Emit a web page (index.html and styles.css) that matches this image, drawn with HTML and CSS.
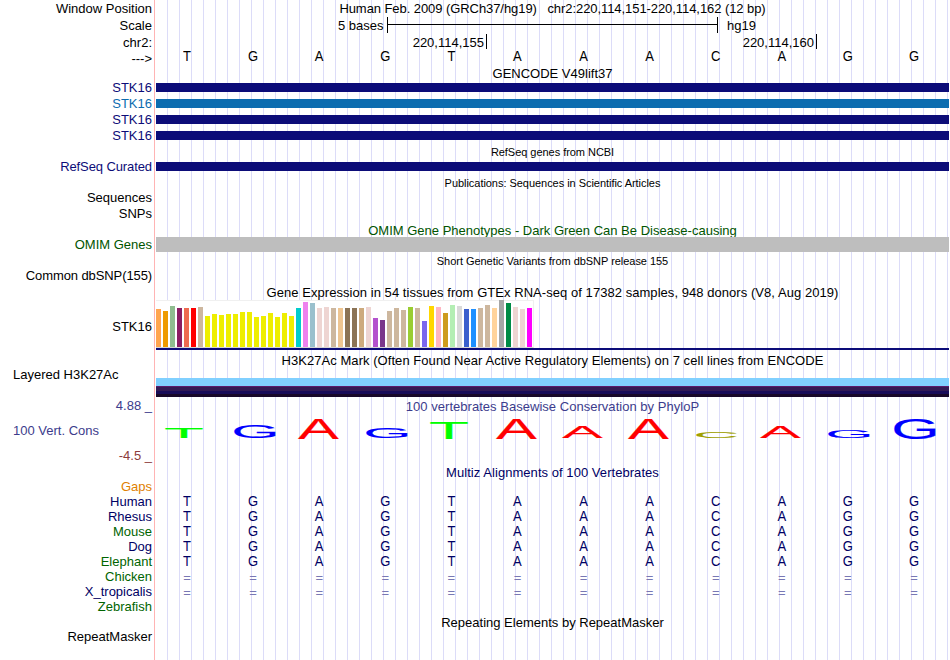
FILE: index.html
```html
<!DOCTYPE html>
<html lang="en">
<head>
    <meta charset="UTF-8">
    <title>Human chr2:220,114,151-220,114,162 Genome Browser</title>
    <link rel="stylesheet" href="styles.css">
</head>
<body>
    <div class="browser">
        <div class="row h17">
            <div class="label">Window Position</div>
            <div class="title position">Human Feb. 2009 (GRCh37/hg19) &nbsp; chr2:220,114,151-220,114,162 (12 bp)</div>
        </div>
        <div class="row h17">
            <div class="label">Scale</div>
            <div class="scale">
                <span class="scale-size">5 bases</span>
                <span class="ruler"><span class="ruler-line"></span></span>
                <span>hg19</span>
            </div>
        </div>
        <div class="row h17">
            <div class="label">chr2:</div>
            <div class="ticks">
                <span class="tick">220,114,155</span>
                <span class="tick">220,114,160</span>
            </div>
        </div>
        <div class="row h15">
            <div class="label">---&gt;</div>
            <div class="bases up">TGAGTAAACAGG</div>
        </div>

        <div class="row h14"><div class="label"></div><div class="title">GENCODE V49lift37</div></div>
        <div class="row h16 navy"><div class="label">STK16</div><div class="gene"></div></div>
        <div class="row h16 blue"><div class="label">STK16</div><div class="gene"></div></div>
        <div class="row h16 navy"><div class="label">STK16</div><div class="gene"></div></div>
        <div class="row h16 navy"><div class="label">STK16</div><div class="gene"></div></div>

        <div class="row h14"><div class="label"></div><div class="title small">RefSeq genes from NCBI</div></div>
        <div class="row h17 navy refseq"><div class="label tight">RefSeq Curated</div><div class="gene"></div></div>

        <div class="row h15"><div class="label"></div><div class="title small down">Publications: Sequences in Scientific Articles</div></div>
        <div class="row h16"><div class="label">Sequences</div></div>
        <div class="row h16"><div class="label">SNPs</div></div>

        <div class="row h15 green"><div class="label"></div><div class="title down">OMIM Gene Phenotypes - Dark Green Can Be Disease-causing</div></div>
        <div class="row h15 green"><div class="label">OMIM Genes</div><div class="omim"></div></div>

        <div class="row h16"><div class="label"></div><div class="title small down">Short Genetic Variants from dbSNP release 155</div></div>
        <div class="row h16"><div class="label tight">Common dbSNP(155)</div></div>

        <div class="row h16"><div class="label"></div><div class="title down wide">Gene Expression in 54 tissues from GTEx RNA-seq of 17382 samples, 948 donors (V8, Aug 2019)</div></div>
        <div class="row gtex-row">
            <div class="label">STK16</div>
            <div class="gtex"><div class="gtex-bars" id="gtex"></div></div>
        </div>

        <div class="row h3k-row">
            <div class="label left">Layered H3K27Ac</div>
            <div class="h3k">
                <div class="title wide">H3K27Ac Mark (Often Found Near Active Regulatory Elements) on 7 cell lines from ENCODE</div>
                <div class="h3k-band"></div>
            </div>
        </div>

        <div class="row cons-row">
            <div class="label cons">
                <span class="max">4.88 _</span>
                <span class="name">100 Vert. Cons</span>
                <span class="min">-4.5 _</span>
            </div>
            <div class="phylop">
                <div class="title max">100 vertebrates Basewise Conservation by PhyloP</div>
                <svg class="logo" id="logo" width="793" height="26" viewBox="156 415 793 26"></svg>
            </div>
        </div>

        <div class="row h14 dark"><div class="label"></div><div class="title wide">Multiz Alignments of 100 Vertebrates</div></div>
        <div class="row h15"><div class="label orange">Gaps</div></div>
        <div class="row h15 dark"><div class="label">Human</div><div class="bases">TGAGTAAACAGG</div></div>
        <div class="row h15 dark"><div class="label">Rhesus</div><div class="bases">TGAGTAAACAGG</div></div>
        <div class="row h15 dark"><div class="label green">Mouse</div><div class="bases">TGAGTAAACAGG</div></div>
        <div class="row h15 dark"><div class="label">Dog</div><div class="bases">TGAGTAAACAGG</div></div>
        <div class="row h15 dark"><div class="label green">Elephant</div><div class="bases">TGAGTAAACAGG</div></div>
        <div class="row h15 dark"><div class="label green">Chicken</div><div class="bases gap">============</div></div>
        <div class="row h15 dark"><div class="label">X_tropicalis</div><div class="bases gap">============</div></div>
        <div class="row h15 dark"><div class="label green">Zebrafish</div></div>

        <div class="row h15"><div class="label"></div><div class="title down">Repeating Elements by RepeatMasker</div></div>
        <div class="row h15"><div class="label">RepeatMasker</div></div>
    </div>
    <script src="tracks.js"></script>
</body>
</html>
```
FILE: styles.css
```css
body {
    margin: 0;
    background: #fff;
    font-family: "Liberation Sans", Arial, Helvetica, sans-serif;
    font-size: 13px;
    color: #000;
}
.browser {
    box-sizing: border-box;
    width: 950px;
    height: 660px;
    overflow: hidden;
    /* left edge line, then a guideline every 12px */
    background:
        linear-gradient(#ffb4b4, #ffb4b4) 154px 0 / 1px 100% no-repeat,
        repeating-linear-gradient(90deg, #dcdcf8 0, #dcdcf8 1px, transparent 1px, transparent 12px) 167px 0 / 783px 100% no-repeat;
}
.row {
    display: grid;
    grid-template-columns: 152px 793px;
    column-gap: 4px;
    line-height: 16px;
    white-space: nowrap;
}
.h14 { height: 14px; line-height: 16px; }
.h15 { height: 15px; line-height: 15px; }
.h16 { height: 16px; }
.h17 { height: 17px; line-height: 17px; }
.label { text-align: right; }
.label.left { text-align: left; padding-left: 13px; }
.title { text-align: center; }
.small { font-size: 11px; letter-spacing: -0.04px; }
.wide { letter-spacing: 0.05px; }
.tight { letter-spacing: -0.1px; }
.position { letter-spacing: -0.07px; }
.down { line-height: 17px; }
.h16 .down { line-height: 18px; }

.navy { color: #0c0c78; }
.blue { color: #0c6cb0; }
.green { color: #005400; }
.dark { color: #000064; }
.orange { color: #e08000; }
.dark .green { color: #006400; }

/* scale and coordinates */
.scale {
    display: flex;
    padding-left: 182px;
}
.scale-size { width: 49px; }
.ruler {
    box-sizing: border-box;
    width: 331px;
    height: 16px;
    margin-right: 9px;
    border: solid #000;
    border-width: 0 1px;
}
.ruler-line {
    display: block;
    height: 1px;
    margin-top: 7px;
    background: #000;
}
.ticks { display: flex; }
.tick {
    box-sizing: border-box;
    width: 330px;
    height: 15px;
    padding-right: 2px;
    border-right: 1px solid #000;
    text-align: right;
}
.tick:first-child { width: 331px; }
.bases {
    display: grid;
    grid-template-columns: repeat(12, 1fr);
    margin-left: -2px;
    margin-right: 2px;
    text-align: center;
    transform: scaleY(1.1);
}
.bases.gap {
    color: #7878b4;
    line-height: 17px;
    transform: none;
}
.up { line-height: 12px; }

/* tracks */
.gene {
    height: 9px;
    margin-top: 3px;
    background: currentColor;
}
.refseq .gene { margin-top: 4px; }
.omim {
    z-index: 1;
    height: 15px;
    background: #bebebe;
}
.gtex-row { height: 50px; line-height: 54px; }
.gtex {
    height: 50px;
    box-sizing: border-box;
    border-bottom: 2px solid #0c0c78;
}
.gtex-bars {
    display: flex;
    align-items: flex-end;
    gap: 2px;
    box-sizing: border-box;
    width: 378px;
    height: 48px;
    background: #fff;
    border: solid #f0f0f0;
    border-width: 1px 1px 0 0;
    border-bottom: 1px solid #d4d4d4;
}
.bar { width: 5px; flex: none; }
.h3k-row { height: 47px; }
.h3k-row .label { padding-top: 17px; }
.h3k .title { height: 28px; line-height: 22px; }
.h3k-band {
    height: 19px;
    background: linear-gradient(#80d0ff 8px, #5c1a6c 8px, #5c1a6c 9px, #321a54 9px, #321a54 13px, #180c58 13px, #180c58 16px, #180828 16px);
}
.cons-row { height: 68px; }
.cons {
    display: flex;
    flex-direction: column;
    justify-content: space-between;
    height: 66px;
    padding-top: 1px;
}
.max { color: #3c3c8c; }
.min { color: #8c3c3c; }
.name {
    padding-left: 13px;
    text-align: left;
    color: #3c3c8c;
}
.phylop .title { height: 18px; line-height: 20px; letter-spacing: 0.03px; }
.logo { display: block; overflow: visible; }
.logo text { font-size: 20px; stroke-width: 0.1px; }
.base-t { fill: #0f0; stroke: #0f0; }
.base-g { fill: #00f; stroke: #00f; }
.base-a { fill: #f00; stroke: #f00; }
.base-c { fill: #a0a000; stroke: #a0a000; }
```
FILE: tracks.js
```javascript
// one column per base
document.querySelectorAll('.bases').forEach(function (row) {
    const seq = row.textContent;
    row.textContent = '';
    for (const base of seq) {
        const cell = document.createElement('span');
        cell.textContent = base;
        row.appendChild(cell);
    }
});

// GTEx tissues: colour, bar height
const tissues = [
    ['#ffa54f', 38], ['#ee9a00', 36], ['#8fbc8f', 41], ['#8b1c62', 39], ['#ee6a50', 39], ['#ff0000', 39],
    ['#cdb79e', 40], ['#eeee00', 31], ['#eeee00', 33], ['#eeee00', 32], ['#eeee00', 33], ['#eeee00', 33],
    ['#eeee00', 35], ['#eeee00', 35], ['#eeee00', 30], ['#eeee00', 31], ['#eeee00', 34], ['#eeee00', 30],
    ['#eeee00', 34], ['#eeee00', 31], ['#00cdcd', 39], ['#ee82ee', 45], ['#9ac0cd', 44], ['#eed5d2', 39],
    ['#eed5d2', 40], ['#cdb79e', 39], ['#eec591', 39], ['#8b7355', 39], ['#8b7355', 39], ['#cdaa7d', 39],
    ['#eed5d2', 40], ['#b452cd', 29], ['#7a378b', 27], ['#cdb79e', 36], ['#cdb79e', 39], ['#cdb79e', 37],
    ['#9acd32', 40], ['#cdb79e', 39], ['#7a67ee', 26], ['#ffd700', 41], ['#ffb6c1', 40], ['#cd9b1d', 34],
    ['#b4eeb4', 42], ['#d9d9d9', 41], ['#3a5fcd', 38], ['#1e90ff', 38], ['#cdb79e', 39], ['#cdb79e', 42],
    ['#ffd39b', 39], ['#a6a6a6', 47], ['#008b45', 44], ['#eed5d2', 40], ['#eed5d2', 38], ['#ff00ff', 39]
];
const gtex = document.getElementById('gtex');
tissues.forEach(function ([color, height]) {
    const bar = document.createElement('span');
    bar.className = 'bar';
    bar.style.background = color;
    bar.style.height = height + 'px';
    gtex.appendChild(bar);
});

// conservation logo: base, left, right, top, bottom
const logo = [
    ['T', 165, 203, 428, 438], ['G', 234, 277, 425, 438], ['A', 298, 339, 418, 439],
    ['G', 366, 409, 428, 438], ['T', 430, 468, 422, 439], ['A', 496, 537, 418, 439],
    ['A', 562, 603, 426, 438], ['A', 628, 669, 418, 439], ['C', 696, 737, 432, 438],
    ['A', 760, 801, 427, 438], ['G', 828, 871, 430, 438], ['G', 894, 937, 418, 439]
];
// ink box of each glyph at 20px: left, right, top, bottom
const ink = {
    T: [0.3, 11.9, 13.9, 0],
    G: [0.9, 14.7, 14.1, 0.3],
    A: [0, 13.4, 13.9, 0],
    C: [0.9, 13.8, 14.1, 0.3]
};
const svg = document.getElementById('logo');
logo.forEach(function ([base, left, right, top, bottom]) {
    const [l, r, t, b] = ink[base];
    const sx = (right - left) / (r - l);
    const sy = (bottom - top) / (t + b);
    const text = document.createElementNS('http://www.w3.org/2000/svg', 'text');
    text.setAttribute('class', 'base-' + base.toLowerCase());
    text.setAttribute('transform', `translate(${left - l * sx} ${bottom - b * sy}) scale(${sx} ${sy})`);
    text.textContent = base;
    svg.appendChild(text);
});
```
